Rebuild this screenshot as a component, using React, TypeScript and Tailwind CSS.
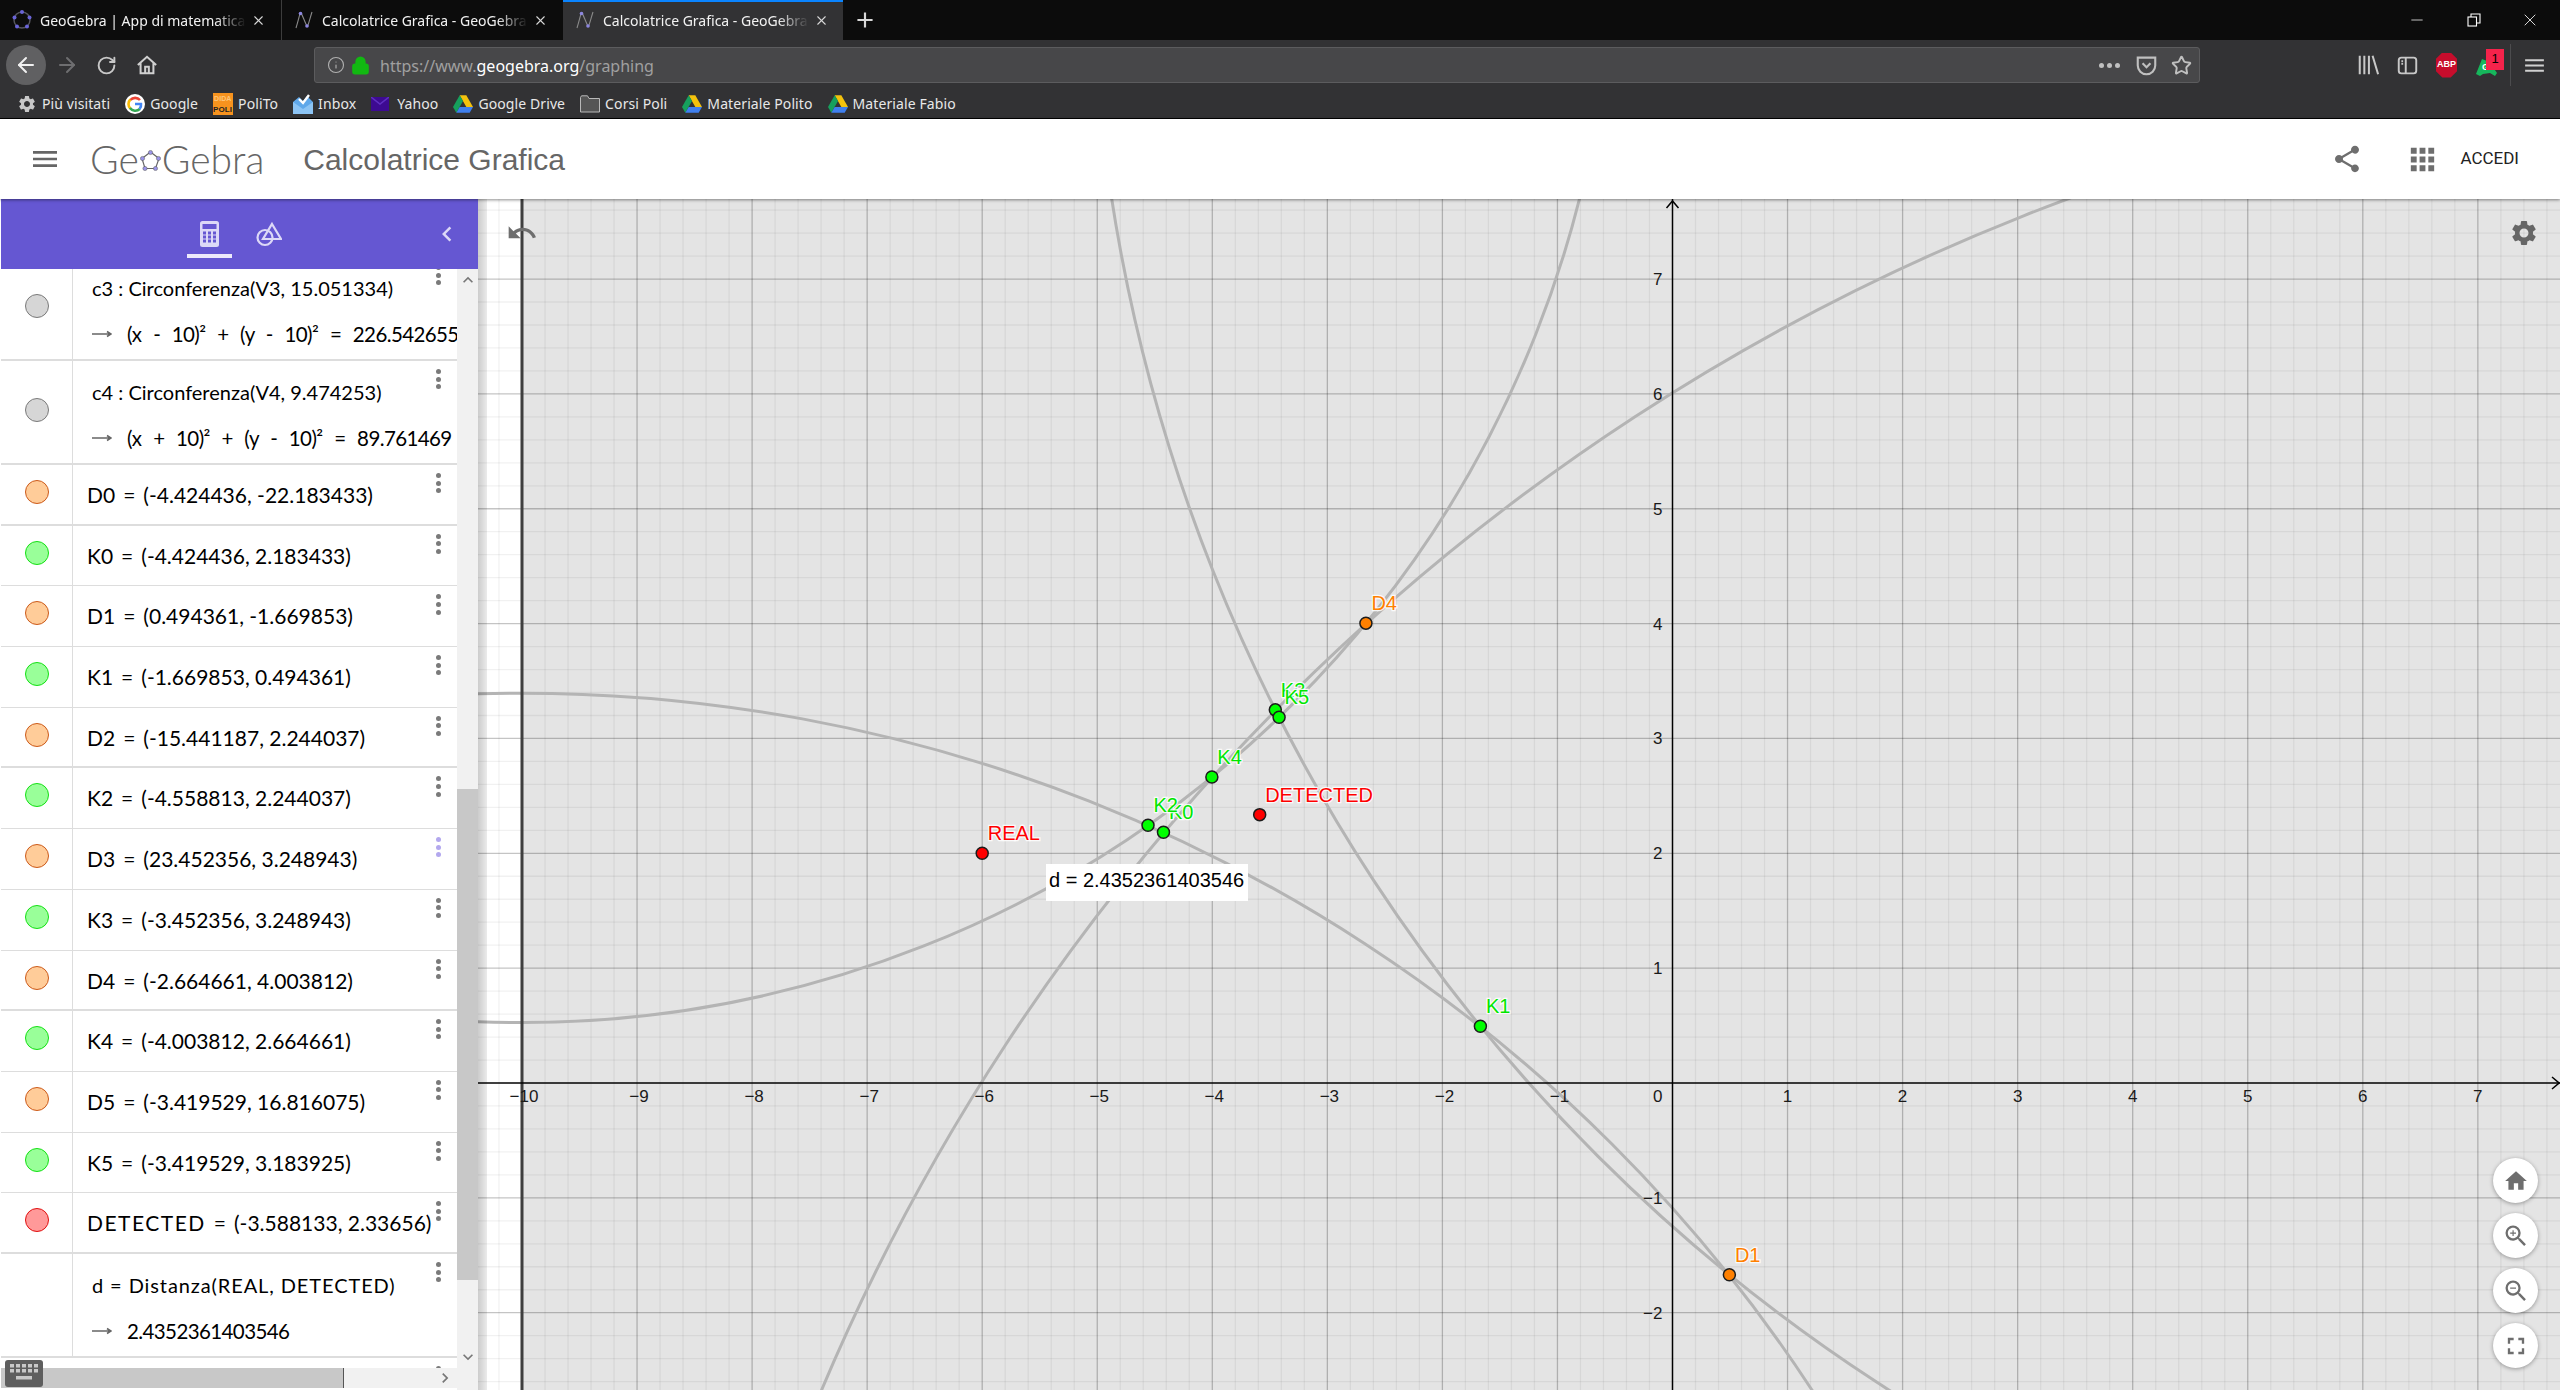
import React from "react";
import {
  MdShare, MdApps, MdSettings, MdHome, MdZoomIn, MdZoomOut, MdFullscreen, MdMenu, MdUndo,
  MdKeyboardArrowUp, MdKeyboardArrowDown, MdChevronLeft, MdChevronRight, MdAdd,
} from "react-icons/md";
import { ArrowLeft, ArrowRight, RotateCw, Info, Lock, Star, Minus, X } from "lucide-react";

const OX = 1672.5, OY = 1083, UX = 115.05, UY = 114.85;
const px = (x: number) => OX + x * UX;
const py = (y: number) => OY - y * UY;

function range(a: number, b: number) {
  const r: number[] = [];
  for (let i = a; i <= b; i++) r.push(i);
  return r;
}

const circles = [
  { cx: -10, cy: -10, r: 13.394 },
  { cx: 10, cy: -10, r: 18.876 },
  { cx: 10, cy: 10, r: 15.051334 },
  { cx: -10, cy: 10, r: 9.474253 },
];

type P = { n: string; x: number; y: number; c: string; t: string };
const G = "#00e600";
const points: P[] = [
  { n: "K1", x: -1.669853, y: 0.494361, c: "#00ff00", t: G },
  { n: "D1", x: 0.494361, y: -1.669853, c: "#ff8000", t: "#ff8000" },
  { n: "D4", x: -2.664661, y: 4.003812, c: "#ff8000", t: "#ff8000" },
  { n: "K4", x: -4.003812, y: 2.664661, c: "#00ff00", t: G },
  { n: "K3", x: -3.452356, y: 3.248943, c: "#00ff00", t: G },
  { n: "K5", x: -3.419529, y: 3.183925, c: "#00ff00", t: G },
  { n: "K0", x: -4.424436, y: 2.183433, c: "#00ff00", t: G },
  { n: "K2", x: -4.558813, y: 2.244037, c: "#00ff00", t: G },
  { n: "REAL", x: -6, y: 2, c: "#ff0000", t: "#ff0000" },
  { n: "DETECTED", x: -3.588133, y: 2.33656, c: "#ff0000", t: "#ff0000" },
];

function Graph() {
  return (
    <svg className="absolute inset-0 w-full h-full" viewBox="478 199 2082 1191">
      <rect x="478" y="199" width="2082" height="1191" fill="#ffffff" />
      <rect x={px(-10)} y="199" width="2100" height="1191" fill="#e4e4e4" />
      {range(-52, 39).filter((i) => i % 5 !== 0).map((i) => (
        <line key={"v" + i} x1={px(i / 5)} x2={px(i / 5)} y1="199" y2="1390" stroke="#000" strokeOpacity="0.055" strokeWidth="1.3" />
      ))}
      {range(-14, 40).filter((i) => i % 5 !== 0).map((i) => (
        <line key={"h" + i} y1={py(i / 5)} y2={py(i / 5)} x1="478" x2="2560" stroke="#000" strokeOpacity="0.055" strokeWidth="1.3" />
      ))}
      {range(-9, 7).filter((i) => i !== 0).map((i) => (
        <line key={"V" + i} x1={px(i)} x2={px(i)} y1="199" y2="1390" stroke="#000" strokeOpacity="0.23" strokeWidth="1.3" />
      ))}
      {range(-2, 7).filter((i) => i !== 0).map((i) => (
        <line key={"H" + i} y1={py(i)} y2={py(i)} x1="478" x2="2560" stroke="#000" strokeOpacity="0.23" strokeWidth="1.3" />
      ))}
      {circles.map((c, i) => (
        <ellipse key={i} cx={px(c.cx)} cy={py(c.cy)} rx={c.r * UX} ry={c.r * UY} fill="none" stroke="#b4b4b4" strokeWidth="3" />
      ))}
      <line x1={px(-10)} x2={px(-10)} y1="199" y2="1390" stroke="#3f3f3f" strokeWidth="3" />
      <line x1={OX} x2={OX} y1="199" y2="1390" stroke="#000" strokeWidth="1.5" />
      <line x1="478" x2="2560" y1={OY} y2={OY} stroke="#000" strokeWidth="1.5" />
      <path d={`M${OX - 6} 208 L${OX} 201 L${OX + 6} 208`} fill="none" stroke="#000" strokeWidth="1.5" />
      <path d={`M2552 ${OY - 6} L2559 ${OY} L2552 ${OY + 6}`} fill="none" stroke="#000" strokeWidth="1.5" />
      <g fontFamily="'Liberation Sans', Arial, sans-serif" fontSize="17" fill="#1a1a1a">
        {range(-10, 7).filter((i) => i !== 0).map((i) => (
          <text key={"xl" + i} x={px(i) + (i < 0 ? 2 : 0)} y="1102" textAnchor="middle">{i < 0 ? "\u2212" + -i : i}</text>
        ))}
        {range(-2, 7).filter((i) => i !== 0).map((i) => (
          <text key={"yl" + i} x={OX - 10} y={py(i) + 6} textAnchor="end">{i < 0 ? "\u2212" + -i : i}</text>
        ))}
        <text x={OX - 10} y="1102" textAnchor="end">0</text>
      </g>
      <g fontFamily="'Liberation Sans', Arial, sans-serif" fontSize="20">
        {points.map((p) => (
          <text key={p.n} x={px(p.x) + 5.5} y={py(p.y) - 13} fill={p.t} stroke="#ffffff" strokeWidth="2.5" strokeOpacity="0.85" style={{ paintOrder: "stroke" }}>{p.n}</text>
        ))}
      </g>
      {points.map((p) => (
        <circle key={p.n} cx={px(p.x)} cy={py(p.y)} r="6" fill={p.c} stroke="#1c1c1c" strokeWidth="1.5" />
      ))}
    </svg>
  );
}

function Drive() {
  return (
    <svg width="20" height="18" viewBox="0 0 24 21" className="shrink-0">
      <path d="M8 0h8l8 14h-8z" fill="#f4c20d" />
      <path d="M8 0 0 14l4 7 8-14z" fill="#16a05d" />
      <path d="M4 21h16l4-7H8z" fill="#3f7fee" />
    </svg>
  );
}

function Bm({ icon, label, className = "" }: { icon: React.ReactNode; label: string; className?: string }) {
  return (
    <div className={"flex items-center gap-[5px] " + className}>
      {icon}
      <span className="whitespace-nowrap">{label}</span>
    </div>
  );
}

function TabIconGraph() {
  return (
    <svg width="20" height="20" viewBox="0 0 20 20" className="shrink-0">
      <path d="M2 18C5 8 6 2 7 3s5 12 6 13 3-8 5-14" fill="none" stroke="#8a8a8a" strokeWidth="1.1" />
      <circle cx="6.5" cy="3.5" r="1.8" fill="#8d87e0" />
      <circle cx="13" cy="16" r="1.8" fill="#8d87e0" />
    </svg>
  );
}

function Tab({ icon, label, active, w, divider }: { icon: React.ReactNode; label: string; active?: boolean; w: string; divider?: boolean }) {
  return (
    <div className={"relative flex items-center h-full pl-[12px] " + w + (active ? " bg-[#323234]" : "") + (divider ? " border-r border-[#3c3c3c]" : "")}>
      {active && <div className="absolute left-0 right-0 top-0 h-[2px] bg-[#0a84ff]" />}
      {icon}
      <span className="ml-[8px] w-[206px] overflow-hidden whitespace-nowrap text-[#f2f2f2] [mask-image:linear-gradient(to_right,black_85%,transparent_100%)]">{label}</span>
      <X size={15} strokeWidth={1.7} className="ml-[5px] text-[#d8d8d8] shrink-0" />
    </div>
  );
}

function TopBars() {
  return (
    <div className="font-['Noto_Sans',sans-serif] text-[14px] shrink-0">
      <div className="flex items-center h-[40px] bg-[#0c0c0c]">
        <Tab w="w-[282px]" divider label="GeoGebra | App di matematica" icon={
          <svg width="20" height="20" viewBox="0 0 20 20" className="shrink-0">
            <circle cx="10" cy="10" r="8" fill="none" stroke="#55555e" strokeWidth="1.5" />
            {[[10, 2], [17.5, 7.5], [15, 16.5], [5, 16.5], [2.5, 7.5]].map((c, i) => <circle key={i} cx={c[0]} cy={c[1]} r="2" fill="#6a64d8" />)}
          </svg>
        } />
        <Tab w="w-[281px]" label="Calcolatrice Grafica - GeoGebra" icon={<TabIconGraph />} />
        <Tab w="w-[280px]" active label="Calcolatrice Grafica - GeoGebra" icon={<TabIconGraph />} />
        <MdAdd size={26} className="ml-[9px] text-[#d8d8d8]" />
        <div className="ml-auto flex items-center pr-[20px] text-white">
          <Minus size={18} strokeWidth={1} />
          <svg width="14" height="14" viewBox="0 0 14 14" fill="none" stroke="#fff" strokeWidth="1.1" className="ml-[41px]"><rect x="1" y="4" width="8.5" height="9" /><path d="M4 4V1h9v9h-3.5" /></svg>
          <X size={20} strokeWidth={1} className="ml-[39px]" />
        </div>
      </div>
      <div className="flex items-center h-[43px] bg-[#323234] pl-[6px] pt-[7px]">
        <div className="flex items-center justify-center w-[40px] h-[40px] rounded-full bg-[#606062] text-[#f0f0f0] shrink-0">
          <ArrowLeft size={24} strokeWidth={2} />
        </div>
        <ArrowRight size={24} strokeWidth={2} className="ml-[9px] text-[#6e6e70] shrink-0" />
        <RotateCw size={21} strokeWidth={2.2} className="ml-[17px] text-[#c8c8c8] shrink-0" />
        <svg width="22" height="22" viewBox="0 0 24 24" fill="none" stroke="#d0d0d0" strokeWidth="2.2" className="ml-[19px] shrink-0"><path d="M2 12 12 3l10 9M5 10v11h14V10M10 21v-7h4v7" /></svg>
        <div className="ml-[156px] flex items-center w-[1886px] h-[36px] bg-[#474749] border border-[#5c5c5e] rounded-[3px] text-[#a0a0a0] shrink-0">
          <Info size={18} strokeWidth={1.5} className="ml-[12px] text-[#b0b0b0]" />
          <Lock size={19} strokeWidth={3} className="ml-[6px] text-[#12b812] fill-[#12b812]" />
          <span className="ml-[10px] pt-[2px] text-[16px]">https://www.<span className="text-white">geogebra.org</span>/graphing</span>
          <div className="ml-auto flex items-center gap-[14px] pr-[7px] text-[#c0c0c0]">
            <span className="flex gap-[3px] mr-[2px]">
              <i className="w-[5px] h-[5px] rounded-full bg-[#c0c0c0]" /><i className="w-[5px] h-[5px] rounded-full bg-[#c0c0c0]" /><i className="w-[5px] h-[5px] rounded-full bg-[#c0c0c0]" />
            </span>
            <svg width="21" height="21" viewBox="0 0 24 24" fill="none" stroke="#c0c0c0" strokeWidth="2.4"><path d="M2 3h20v9a10 10 0 0 1-20 0zM7.5 9.5 12 14l4.5-4.5" /></svg>
            <Star size={21} strokeWidth={2.2} />
          </div>
        </div>
        <div className="flex items-center ml-[157px] text-[#c0c0c0]">
          <svg width="22" height="22" viewBox="0 0 24 24" fill="none" stroke="#c8c8c8" strokeWidth="2.2" className="mr-[18px]"><path d="M3 2v20M8 2v20M13 2v20M17 2l6 20" /></svg>
          <svg width="21" height="21" viewBox="0 0 24 24" fill="none" stroke="#c8c8c8" strokeWidth="2.2" className="mr-[18px]"><rect x="2" y="3" width="20" height="18" rx="3" /><path d="M10 3v18M5 7h2M5 10h2" /></svg>
          <div className="relative flex items-center justify-center w-[21px] h-[25px] bg-[#c70d2c] [clip-path:polygon(30%_0,70%_0,100%_25%,100%_75%,70%_100%,30%_100%,0_75%,0_25%)] text-white text-[9px] font-bold font-['Liberation_Sans',sans-serif] mr-[19px]">ABP</div>
          <div className="relative w-[21px] h-[25px] mr-[13px]">
            <svg width="21" height="21" viewBox="0 0 21 21" className="absolute left-0 top-[4px]"><path d="M0 17 6 2l5 2 3 2 7 10-2 3-5-3-7 1-3 2z" fill="#16b75c" /><text x="6" y="13" fontSize="9" fontWeight="700" fill="#fff" fontFamily="'Liberation Sans', sans-serif">G</text></svg>
            <span className="absolute left-[10px] -top-[4px] flex items-center justify-center w-[18px] h-[21px] bg-[#f5234b] text-[13px] text-black font-['Liberation_Sans',sans-serif]">1</span>
          </div>
          <div className="w-px h-[42px] bg-[#4c4c4e]" />
          <MdMenu size={25} className="ml-[11px] text-[#d0d0d0]" />
        </div>
      </div>
      <div className="flex items-center h-[36px] pt-[6px] bg-[#323234] border-b border-black text-[#e8e8e8] pl-[17px] text-[14px] tracking-[0.1px] gap-[15px]">
        <Bm label="Più visitati" icon={<MdSettings size={20} className="text-[#c8c8c8]" />} className="gap-[3px]" />
        <Bm label="Google" icon={
          <svg width="20" height="20" viewBox="0 0 20 20"><circle cx="10" cy="10" r="10" fill="#fff" /><path d="M15 6a6.5 6.5 0 0 0-9.7 0" fill="none" stroke="#ea4335" strokeWidth="2.6" /><path d="M5.3 5.5a6.5 6.5 0 0 0 0 9" fill="none" stroke="#fbbc05" strokeWidth="2.6" /><path d="M5 14a6.5 6.5 0 0 0 9.8 1" fill="none" stroke="#34a853" strokeWidth="2.6" /><path d="M10 10h6a6 6 0 0 1-1.5 5" fill="none" stroke="#4285f4" strokeWidth="2.6" /></svg>
        } />
        <Bm label="PoliTo" icon={
          <svg width="20" height="22" viewBox="0 0 20 22"><rect width="20" height="22" fill="#f7931e" /><text x="1" y="8" fontSize="7" fontWeight="700" fill="#ffc77a" fontFamily="'Liberation Sans', sans-serif">DIDA</text><text x="0" y="19" fontSize="8" fontWeight="700" fill="#222" fontFamily="'Liberation Sans', sans-serif">POLI</text></svg>
        } />
        <Bm label="Inbox" icon={
          <svg width="20" height="20" viewBox="0 0 20 20"><path d="M0 8l6-5 4 4 4-5 6 6v12H0z" fill="#5fa8ea" /><path d="M0 8l10 7 10-7v12H0z" fill="#8cc4f4" /><path d="M6 5l4 4 6-8" fill="none" stroke="#fff" strokeWidth="2.4" /></svg>
        } />
        <Bm className="gap-[8px]" label="Yahoo" icon={
          <svg width="18" height="14" viewBox="0 0 18 14"><rect width="18" height="14" fill="#3d0a91" /><path d="M0 0l9 7 9-7" fill="none" stroke="#5f2fc0" strokeWidth="1.4" /></svg>
        } />
        <Bm label="Google Drive" icon={<Drive />} />
        <Bm label="Corsi Poli" icon={
          <svg width="20" height="18" viewBox="0 0 20 18"><path d="M.5 2.5V17h19V3.5H9L7.5.8H1.5z" fill="#555" stroke="#b8b8b8" /></svg>
        } />
        <Bm label="Materiale Polito" icon={<Drive />} />
        <Bm label="Materiale Fabio" icon={<Drive />} />
      </div>
    </div>
  );
}

function Header() {
  return (
    <div className="relative z-20 flex items-center h-[80px] bg-white shrink-0 shadow-[0_1px_3px_rgba(0,0,0,0.45)] text-[#666666] font-['Liberation_Sans',sans-serif]">
      <MdMenu size={32} className="ml-[29px] text-[#666666]" />
      <div className="ml-[29px] flex items-center font-['Lato',sans-serif] font-light text-[39px] leading-none">
        <span>Ge</span>
        <svg width="21" height="21" viewBox="0 0 21 21" className="mx-[1px] mt-[3px]">
          <path d="M10.5 2 19 8.5 15.5 18.5H5L2 8.5z" fill="none" stroke="#666" strokeWidth="1.2" />
          {[[10.5, 2.5], [18.5, 8.5], [15.5, 18.5], [5, 18.5], [2.5, 8.5]].map((c, i) => <circle key={i} cx={c[0]} cy={c[1]} r="2.1" fill="#9a94e8" stroke="#555" strokeWidth="0.5" />)}
        </svg>
        <span>Gebra</span>
      </div>
      <span className="ml-[39px] text-[30px]">Calcolatrice Grafica</span>
      <div className="ml-auto flex items-center text-[#6e6e6e]">
        <MdShare size={32} />
        <MdApps size={35} className="ml-[42px]" />
        <span className="ml-[20px] mr-[41px] text-[17px] text-[#222222] font-['Roboto',sans-serif]">ACCEDI</span>
      </div>
    </div>
  );
}

const rows: [string, string, string][] = [
  ["D0", "(-4.424436, -22.183433)", "o"],
  ["K0", "(-4.424436, 2.183433)", "g"],
  ["D1", "(0.494361, -1.669853)", "o"],
  ["K1", "(-1.669853, 0.494361)", "g"],
  ["D2", "(-15.441187, 2.244037)", "o"],
  ["K2", "(-4.558813, 2.244037)", "g"],
  ["D3", "(23.452356, 3.248943)", "o"],
  ["K3", "(-3.452356, 3.248943)", "g"],
  ["D4", "(-2.664661, 4.003812)", "o"],
  ["K4", "(-4.003812, 2.664661)", "g"],
  ["D5", "(-3.419529, 16.816075)", "o"],
  ["K5", "(-3.419529, 3.183925)", "g"],
  ["DETECTED", "(-3.588133, 2.33656)", "r"],
];

const marbleCls: Record<string, string> = {
  o: "bg-[#ffcc99] border-[#cc5a1a]",
  g: "bg-[#99ff99] border-[#14e014]",
  r: "bg-[#ff9999] border-[#e01010]",
  n: "bg-[#d6d6d6] border-[#7a7a7a]",
};

function Dots({ purple, top }: { purple?: boolean; top: string }) {
  const c = purple ? "bg-[#b3a8ee]" : "bg-[#7a7a7a]";
  return (
    <div className={"absolute left-[435px] flex flex-col gap-[2.6px] " + top}>
      <i className={"w-[5px] h-[5px] rounded-full " + c} />
      <i className={"w-[5px] h-[5px] rounded-full " + c} />
      <i className={"w-[5px] h-[5px] rounded-full " + c} />
    </div>
  );
}

function Arrow() {
  return (
    <svg width="20" height="10" viewBox="0 0 20 10" className="shrink-0">
      <path d="M0 5h18M15 2.5 19 5l-4 2.5" fill="none" stroke="#666" strokeWidth="1.6" />
    </svg>
  );
}

function TallRow({ marble, l1, l2, wide }: { marble?: string; l1: string; l2: string; wide?: boolean }) {
  return (
    <div className="relative flex h-[104px] shrink-0 border-b-2 border-[#dddddd] overflow-hidden">
      <div className="flex justify-center w-[72px] pl-px border-r border-[#dddddd] shrink-0 pt-[37px]">
        {marble && <div className={"w-[24px] h-[24px] rounded-full border " + marbleCls[marble]} />}
      </div>
      <div className="flex-1 pl-[19px] pt-[16px] min-w-0 whitespace-nowrap overflow-hidden">
        <div className={"text-[20px] leading-[30px] " + (wide ? "tracking-[0.9px]" : "")}>{l1}</div>
        <div className="flex items-center mt-[16px] text-[20.5px] leading-[30px] tracking-[-0.6px] [word-spacing:7px]">
          <Arrow />
          <span className="ml-[15px]">{l2}</span>
        </div>
      </div>
      <Dots top="top-[8px]" />
    </div>
  );
}

function ShortRow({ r, i }: { r: [string, string, string]; i: number }) {
  const thick = i % 4 === 0;
  return (
    <div className={"relative flex h-[60.7px] shrink-0 border-[#dddddd] overflow-hidden " + (thick ? "border-b-2" : "border-b")}>
      <div className="flex justify-center w-[72px] pl-px border-r border-[#dddddd] shrink-0 pt-[15px]">
        <div className={"w-[24px] h-[24px] rounded-full border " + marbleCls[r[2]]} />
      </div>
      <div className="pl-[14px] pt-[15px] text-[21px] leading-[30px] whitespace-nowrap">
        <span className={r[0] === "DETECTED" ? "tracking-[1.5px]" : ""}>{r[0]}</span>
        <span className="mx-[8px]">=</span>
        <span>{r[1]}</span>
      </div>
      <Dots purple={r[0] === "D3"} top="top-[8px]" />
    </div>
  );
}

function Sidebar() {
  return (
    <div className="relative w-[478px] shrink-0 flex flex-col bg-white pl-px">
      <div className="relative flex items-center h-[70px] bg-[#6557d2] shrink-0 text-[#dcd8f7]">
        <div className="ml-[186px] flex flex-col items-center w-[45px] h-full justify-end">
          <svg width="19" height="26" viewBox="0 0 19 26" className="mb-[7px]">
            <rect width="19" height="26" rx="2.5" fill="#dcd8f7" />
            <rect x="2.5" y="3" width="14" height="5" fill="#6557d2" />
            {[10.5, 14.5, 18.5].map((y) => [3, 8, 13].map((x) => <rect key={x + "-" + y} x={x} y={y} width="3" height="3" fill="#6557d2" />))}
          </svg>
          <div className="w-[45px] h-[4px] bg-[#ece9fb] mb-[11px]" />
        </div>
        <svg width="26" height="26" viewBox="0 0 26 26" className="ml-[24px]" fill="none" stroke="#dcd8f7" strokeWidth="2.2">
          <circle cx="9" cy="16.5" r="7.5" />
          <path d="M16 3 25 18H7z" />
        </svg>
        <MdChevronLeft size={30} className="absolute left-[431px] top-[20px]" />
      </div>
      <div className="flex flex-1 min-h-0">
        <div className="w-[456px] shrink-0 flex flex-col font-['Lato',sans-serif] text-black">
          <div className="h-[1099px] overflow-hidden flex flex-col">
            <div className="-mt-[12px]" />
            <TallRow marble="n" l1="c3 : Circonferenza(V3, 15.051334)" l2="(x - 10)² + (y - 10)² = 226.542655" />
            <TallRow marble="n" l1="c4 : Circonferenza(V4, 9.474253)" l2="(x + 10)² + (y - 10)² = 89.761469" />
            {rows.map((r, i) => <ShortRow key={r[0]} r={r} i={i} />)}
            <TallRow wide l1="d = Distanza(REAL, DETECTED)" l2="2.4352361403546" />
            <div className="relative h-[40px] shrink-0"><Dots top="top-[8px]" /></div>
          </div>
          <div className="relative flex items-center h-[20px] bg-[#f1f1f1] shrink-0">
            <div className="w-[343px] h-full bg-[#c8c8c8] border-r border-[#555555]" />
            <MdChevronRight size={20} className="ml-auto mr-[2px] text-[#777777]" />
            <div className="absolute left-[4px] -top-[8px] flex flex-col items-center justify-center gap-[1px] w-[38px] h-[27px] rounded-[3px] bg-[#5e5e5e]">
              <svg width="28" height="20" viewBox="0 0 28 20" fill="#c8c8c8">
                {[0, 1].map((r) => [0, 1, 2, 3, 4].map((c) => <rect key={r + "-" + c} x={c * 6} y={r * 5} width="4" height="3.5" />))}
                <rect x="6" y="12" width="16" height="3.5" />
              </svg>
            </div>
          </div>
        </div>
        <div className="w-[21px] shrink-0 flex flex-col bg-[#f1f1f1]">
          <div className="h-[520px] flex justify-center pt-[1px]"><MdKeyboardArrowUp size={20} className="text-[#777777]" /></div>
          <div className="h-[491px] bg-[#c8c8c8]" />
          <div className="flex-1 flex justify-center pt-[67px]"><MdKeyboardArrowDown size={20} className="text-[#777777]" /></div>
        </div>
      </div>
    </div>
  );
}

function RoundBtn({ children }: { children: React.ReactNode }) {
  return (
    <div className="flex items-center justify-center w-[45px] h-[45px] rounded-full bg-white shadow-[0_1px_4px_rgba(0,0,0,0.35)] text-[#6e6e6e]">
      {children}
    </div>
  );
}

function Canvas() {
  return (
    <div className="relative flex-1 overflow-hidden">
      <Graph />
      <div className="absolute left-0 top-0 bottom-0 w-[9px] bg-gradient-to-r from-black/20 to-black/8" />
      <MdUndo size={32} className="absolute left-[28px] top-[18px] text-[#6e6e6e]" />
      <MdSettings size={30} className="absolute left-[2031px] top-[19px] text-[#666666]" />
      <div className="absolute left-[568px] top-[665px] flex items-center w-[202px] h-[37px] bg-white pl-[3px] pb-[5px] text-[20px] text-black font-['Liberation_Sans',sans-serif] whitespace-nowrap">d = 2.4352361403546</div>
      <div className="absolute left-[2015px] top-[959px] flex flex-col gap-[10px]">
        <RoundBtn><MdHome size={26} /></RoundBtn>
        <RoundBtn><MdZoomIn size={28} /></RoundBtn>
        <RoundBtn><MdZoomOut size={28} /></RoundBtn>
        <RoundBtn><MdFullscreen size={28} /></RoundBtn>
      </div>
    </div>
  );
}

export default function App() {
  return (
    <div className="w-[2560px] h-[1390px] overflow-hidden flex flex-col bg-white font-['Liberation_Sans',sans-serif]">
      <TopBars />
      <Header />
      <div className="flex flex-1 min-h-0">
        <Sidebar />
        <Canvas />
      </div>
    </div>
  );
}
